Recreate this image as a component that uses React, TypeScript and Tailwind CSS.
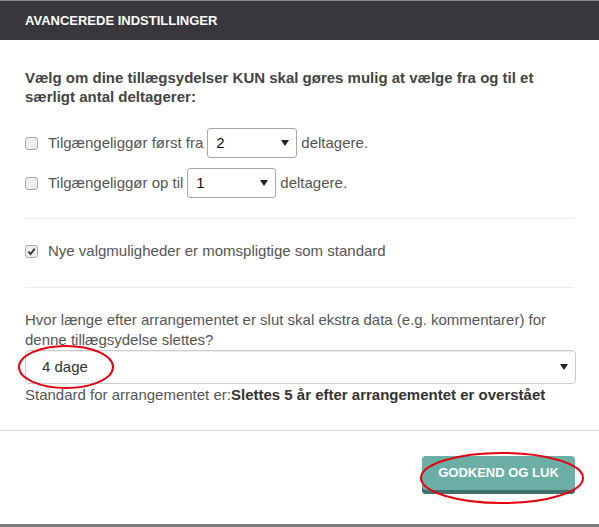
import React from 'react';

function Box({ checked = false }: { checked?: boolean }) {
  return (
    <span className="flex h-[13px] w-[13px] shrink-0 items-center justify-center rounded-[3px] border border-[#a9a9a9] bg-[#eeeeee]">
      {checked && (
        <svg width="9" height="9" viewBox="0 0 10 10">
          <path d="M1.5 5.2 L4 7.8 L8.6 1.8" fill="none" stroke="#333" strokeWidth="2" />
        </svg>
      )}
    </span>
  );
}

function Caret() {
  return (
    <svg width="8" height="6" viewBox="0 0 8 6" className="shrink-0">
      <path d="M0 0 H8 L4 6 Z" fill="#222" />
    </svg>
  );
}

function SmallSelect({ value, width }: { value: string; width: string }) {
  return (
    <span className={`mx-[4px] flex h-[30px] ${width} items-center justify-between rounded-[3px] border border-[#a9a9a9] bg-white pl-[8px] pr-[7px] text-[#111]`}>
      <span>{value}</span>
      <Caret />
    </span>
  );
}

export default function App() {
  return (
    <div className="relative h-[527px] w-[599px] overflow-hidden bg-white font-['Liberation_Sans',Arial,sans-serif] text-[15px] text-[#555]">
      {/* Header */}
      <div className="flex h-[40px] items-center border-t border-[#8a8a8a] bg-[#39373c] px-[25px]">
        <h1 className="text-[13px] font-bold text-white">AVANCEREDE INDSTILLINGER</h1>
      </div>

      {/* Body */}
      <div className="px-[25px] pt-[28px]">
        <p className="font-bold leading-[19px] text-[#444]">
          Vælg om dine tillægsydelser KUN skal gøres mulig at vælge fra og til et særligt antal deltagerer:
        </p>

        <div className="mt-[22px] flex items-center">
          <Box />
          <span className="ml-[10px]">Tilgængeliggør først fra</span>
          <SmallSelect value="2" width="w-[90px]" />
          <span>deltagere.</span>
        </div>
        <div className="mt-[10px] flex items-center">
          <Box />
          <span className="ml-[10px]">Tilgængeliggør op til</span>
          <SmallSelect value="1" width="w-[89px]" />
          <span>deltagere.</span>
        </div>

        <div className="mt-[20px] border-t border-[#eeeeee]" />

        <div className="mt-[22px] flex h-[20px] items-center">
          <Box checked />
          <span className="ml-[10px]">Nye valgmuligheder er momspligtige som standard</span>
        </div>

        <div className="mt-[26px] border-t border-[#eeeeee]" />

        <p className="mt-[22px] leading-[20px]">
          Hvor længe efter arrangementet er slut skal ekstra data (e.g. kommentarer) for denne tillægsydelse slettes?
        </p>
        <div className="flex h-[34px] w-[551px] items-center justify-between rounded-[4px] border border-[#cccccc] bg-white pl-[16px] pr-[7px] text-[#333] shadow-[inset_0_1px_1px_rgba(0,0,0,0.075)]">
          <span>4 dage</span>
          <Caret />
        </div>
        <p className="leading-[22px]">
          Standard for arrangementet er:<b className="text-[#333]">Slettes 5 år efter arrangementet er overstået</b>
        </p>
      </div>

      {/* Footer */}
      <div className="mt-[24px] flex justify-end border-t border-[#e0e0d8] px-[24px] pt-[25px]">
        <button className="h-[38px] w-[153px] rounded-[4px] bg-[#6aaea5] pb-[4px] text-[13px] font-bold text-white shadow-[inset_0_-4px_0_#416f6a]">
          GODKEND OG LUK
        </button>
      </div>

      <div className="absolute bottom-0 left-0 h-[3px] w-full bg-[#7b7b7b]" />

      {/* annotations */}
      <svg className="pointer-events-none absolute left-0 top-0" width="599" height="527">
        <ellipse cx="66" cy="367" rx="47" ry="21" fill="none" stroke="#e3000f" strokeWidth="2" />
        <ellipse cx="502" cy="478" rx="81" ry="25" fill="none" stroke="#e3000f" strokeWidth="2" />
      </svg>
    </div>
  );
}
